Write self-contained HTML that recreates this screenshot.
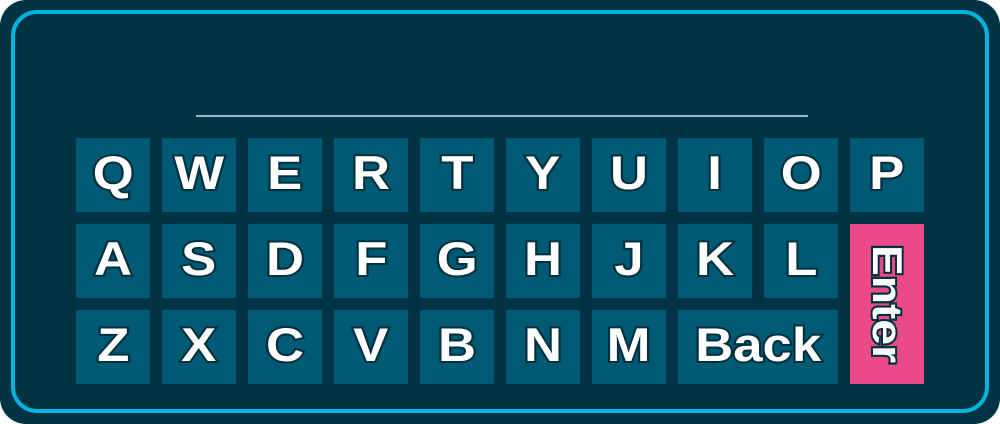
<!DOCTYPE html>
<html><head><style>
html,body{margin:0;padding:0;background:#fff;}
#o{position:absolute;left:0;top:0;width:1000px;height:424px;background:#003444;border-radius:26px;overflow:hidden;}
#b{position:absolute;left:11px;top:10px;width:970px;height:395px;border:4px solid #00b4e0;border-radius:26px;}
#ln{position:absolute;left:196px;top:115px;width:612px;height:2px;background:#9fb3ba;}
.k{position:absolute;width:74px;height:74px;background:#005a73;color:#fff;font:bold 47px/70px "Liberation Sans",sans-serif;text-align:center;-webkit-text-stroke:4px #00303e;paint-order:stroke fill;}
.k b{display:inline-block;transform:scaleX(1.12);font-weight:bold;}
.e{background:#ea4a8a;height:160px;}
.e span{position:absolute;left:37px;top:80px;transform:translate(-50%,-50%) rotate(90deg) scaleX(1.1);white-space:nowrap;font-size:42px;line-height:42px;}
</style></head><body><div id="o"><div id="b"></div><div id="ln"></div>
<div class="k" style="left:76px;top:138px"><b>Q</b></div>
<div class="k" style="left:162px;top:138px"><b>W</b></div>
<div class="k" style="left:248px;top:138px"><b>E</b></div>
<div class="k" style="left:334px;top:138px"><b>R</b></div>
<div class="k" style="left:420px;top:138px"><b>T</b></div>
<div class="k" style="left:506px;top:138px"><b>Y</b></div>
<div class="k" style="left:592px;top:138px"><b>U</b></div>
<div class="k" style="left:678px;top:138px"><b>I</b></div>
<div class="k" style="left:764px;top:138px"><b>O</b></div>
<div class="k" style="left:850px;top:138px"><b>P</b></div>
<div class="k" style="left:76px;top:224px"><b>A</b></div>
<div class="k" style="left:162px;top:224px"><b>S</b></div>
<div class="k" style="left:248px;top:224px"><b>D</b></div>
<div class="k" style="left:334px;top:224px"><b>F</b></div>
<div class="k" style="left:420px;top:224px"><b>G</b></div>
<div class="k" style="left:506px;top:224px"><b>H</b></div>
<div class="k" style="left:592px;top:224px"><b>J</b></div>
<div class="k" style="left:678px;top:224px"><b>K</b></div>
<div class="k" style="left:764px;top:224px"><b>L</b></div>
<div class="k e" style="left:850px;top:224px"><span>Enter</span></div>
<div class="k" style="left:76px;top:310px"><b>Z</b></div>
<div class="k" style="left:162px;top:310px"><b>X</b></div>
<div class="k" style="left:248px;top:310px"><b>C</b></div>
<div class="k" style="left:334px;top:310px"><b>V</b></div>
<div class="k" style="left:420px;top:310px"><b>B</b></div>
<div class="k" style="left:506px;top:310px"><b>N</b></div>
<div class="k" style="left:592px;top:310px"><b>M</b></div>
<div class="k" style="left:678px;top:310px;width:160px"><b>Back</b></div>
</div></body></html>
